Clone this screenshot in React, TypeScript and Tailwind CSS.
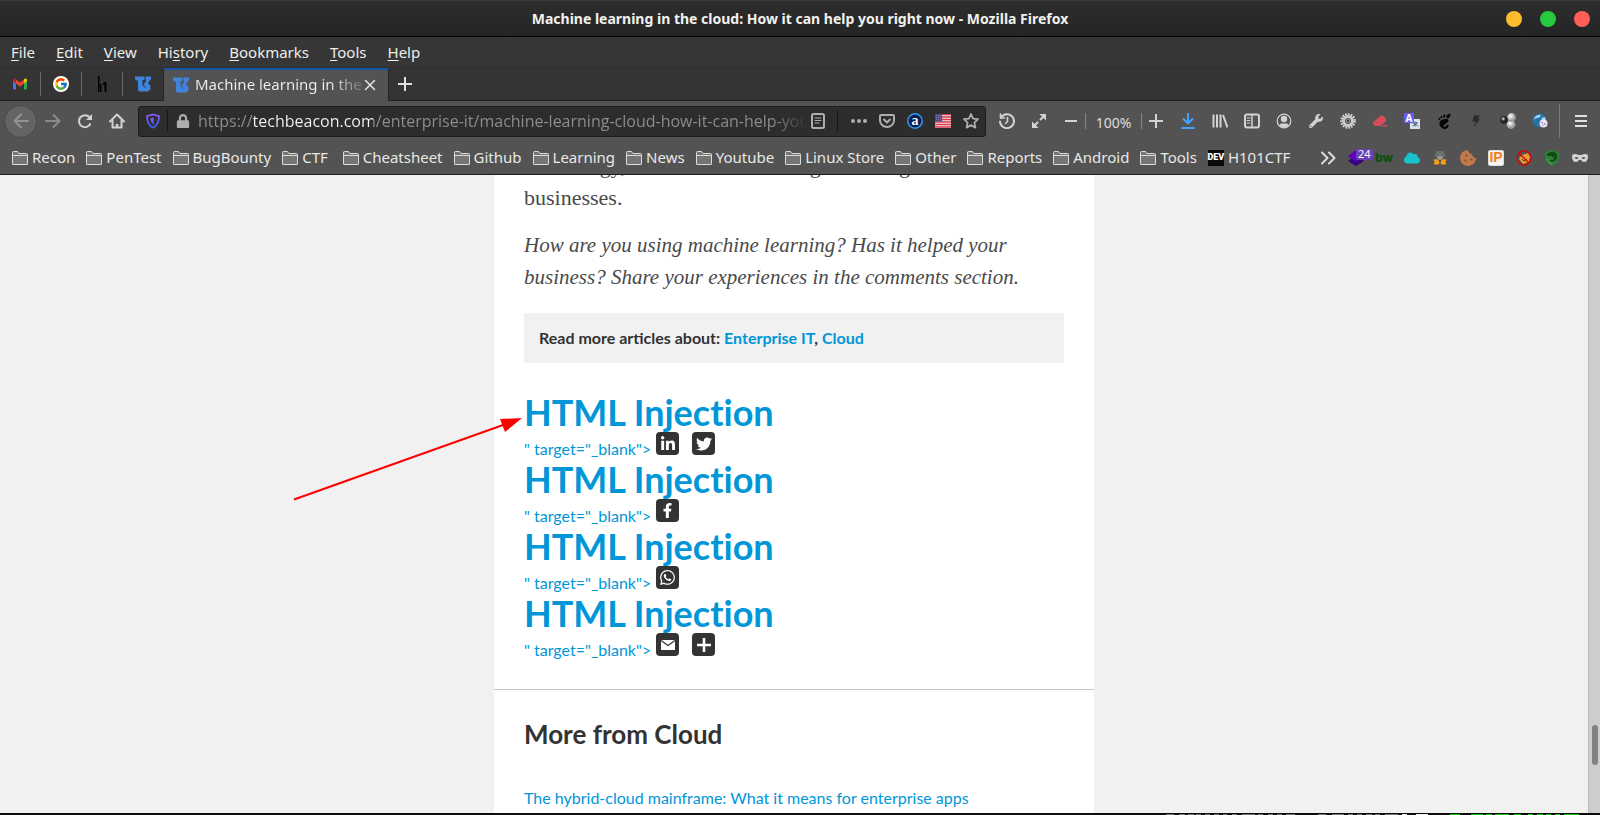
import type { ReactNode } from "react";
import { FcGoogle } from "react-icons/fc";
import {
  FaCloud,
  FaCookieBite,
  FaFacebookF,
  FaLinkedinIn,
  FaLock,
  FaTwitter,
  FaWhatsapp,
  FaWrench,
} from "react-icons/fa";
import { SiGnome } from "react-icons/si";

const ui = "font-['Noto_Sans',sans-serif]";

function Gmail() {
  return (
    <svg viewBox="0 0 16 16" className="size-4">
      <path d="M1 4.5v8.2c0 .5.4.8.8.8H4V7z" fill="#4f6ff5" />
      <path d="M15 4.5v8.2c0 .5-.4.8-.8.8H12V7z" fill="#2fa84f" />
      <path d="M12 3.6V7.6l3-2.3V4c0-1.6-1.6-2-2.4-1.2z" fill="#fbbc04" />
      <path d="M4 3.6V7.6L1 5.3V4c0-1.6 1.6-2 2.4-1.2z" fill="#c5221f" />
      <path d="M4 3.4 8 6.5l4-3.1v4.2l-4 3.1-4-3.1z" fill="#ea4335" />
    </svg>
  );
}

function Beacon() {
  return (
    <svg viewBox="0 0 16 16" className="size-4 shrink-0" fill="#3f83dc">
      <path d="M0 .5H9.500V4H7.500V9L11 12.500V15.500H4L3 14V4.500H1L0 3z" />
      <path d="M10.500 .5H16V3L13 7l2.500 3V13L13 15.500H11V12L8.500 8.500 11 5V3.500H10.500z" />
    </svg>
  );
}

function HackerOne() {
  return (
    <svg viewBox="0 0 16 16" className="size-4" fill="#000">
      <path d="M3.500 0h2v16h-1.500V1zM5.500 8h1v1h-1zM6 8.500h1.500V16H6zM8.500 7.500l2-1.500h2v10h-2V8.500h-2z" />
    </svg>
  );
}

function Folder() {
  return (
    <svg viewBox="0 0 16 14" className="h-[14px] w-4 shrink-0" fill="#757573" stroke="#dcdcda" strokeWidth="1">
      <path d="M.5 13V1.500Q.5.5 1.500.5H5.500L7 2.500H14.500Q15.500 2.500 15.500 3.500V13Q15.500 13.500 15 13.500H1Q.5 13.500.5 13z" />
      <path d="M.5 4.500h15" />
    </svg>
  );
}

function Cell({ label, children }: { label: string; children: ReactNode }) {
  return (
    <button type="button" aria-label={label} className="flex h-8 w-8 shrink-0 items-center justify-center text-[#d3d3d1]">
      {children}
    </button>
  );
}

function Small({ label, children }: { label: string; children: ReactNode }) {
  return (
    <button type="button" aria-label={label} className="flex h-7 w-7 shrink-0 items-center justify-center text-[#d3d3d1]">
      {children}
    </button>
  );
}

function Line({ children, className = "size-4", width = 2 }: { children: ReactNode; className?: string; width?: number }) {
  return (
    <svg viewBox="0 0 16 16" className={className} fill="none" stroke="currentColor" strokeWidth={width} strokeLinecap="round" strokeLinejoin="round">
      {children}
    </svg>
  );
}

const menus: [string, string, string][] = [
  ["", "F", "ile"],
  ["", "E", "dit"],
  ["", "V", "iew"],
  ["Hi", "s", "tory"],
  ["", "B", "ookmarks"],
  ["", "T", "ools"],
  ["", "H", "elp"],
];

const folders = ["Recon", "PenTest", "BugBounty", "CTF ", "Cheatsheet", "Github", "Learning", "News", "Youtube", "Linux Store", "Other", "Reports", "Android", "Tools"];

function TitleBar() {
  return (
    <header className="grid h-[37px] shrink-0 grid-cols-[1fr_auto_1fr] items-center border-t border-b border-t-[#3c3c3c] border-b-black bg-linear-to-b from-[#2d2d2d] to-[#252525]">
      <span />
      <h1 className="text-sm font-bold text-[#f1f1ef]">Machine learning in the cloud: How it can help you right now - Mozilla Firefox</h1>
      <div className="flex justify-end gap-[18px] pr-[10px]">
        <button type="button" aria-label="Minimize" className="size-4 rounded-full bg-[#febc2e]" />
        <button type="button" aria-label="Maximize" className="size-4 rounded-full bg-[#28c840]" />
        <button type="button" aria-label="Close" className="size-4 rounded-full bg-[#ff5f57]" />
      </div>
    </header>
  );
}

function MenuBar() {
  return (
    <nav className="flex h-[31px] shrink-0 items-center gap-[21px] border-b border-[#2e2e2e] bg-[#363636] px-[11px] pt-px text-[15px] text-[#eeeeec]">
      {menus.map(([before, key, after]) => (
        <button type="button" key={key + after}>
          {before}
          <span className="underline underline-offset-2">{key}</span>
          {after}
        </button>
      ))}
    </nav>
  );
}

function TabBar() {
  const pinned: [string, ReactNode][] = [
    ["Gmail", <Gmail />],
    ["Google", <span className="rounded-full bg-white p-px"><FcGoogle className="size-[14px]" /></span>],
    ["HackerOne", <HackerOne />],
    ["TechBeacon", <Beacon />],
  ];
  return (
    <div className="flex h-[33px] shrink-0 border-b border-[#1f1f1f] bg-[#343434]">
      {pinned.map(([name, icon], i) => (
        <div key={name} className="flex items-center">
          <button type="button" aria-label={name} className="flex w-10 justify-center">{icon}</button>
          {i < 3 && <span className="h-6 w-px bg-[#6c6c6c]" />}
        </div>
      ))}
      <div className="-mb-px flex w-[226px] items-center gap-[6px] border-x border-t-2 border-x-[#232323] border-t-[#1556a8] bg-[#535353] pr-3 pb-[2px] pl-[9px]">
        <Beacon />
        <span className="flex-1 bg-linear-to-r from-[#f0f0ee] from-80% to-[#f0f0ee]/20 bg-clip-text text-[15px] whitespace-nowrap text-transparent">Machine learning in the</span>
        <button type="button" aria-label="Close tab" className="-ml-1 shrink-0 text-[#e4e4e2]">
          <Line className="size-3"><path d="M2 2l12 12M14 2 2 14" /></Line>
        </button>
      </div>
      <button type="button" aria-label="New tab" className="flex w-8 items-center justify-center text-[#e0e0de]">
        <svg viewBox="0 0 14 14" className="size-[14px]" stroke="currentColor" strokeWidth="2"><path d="M7 0v14M0 7h14" /></svg>
      </button>
    </div>
  );
}

function AddressBar() {
  return (
    <div className="flex h-[31px] min-w-0 flex-1 items-center rounded-[3px] border border-[#1b1b1b] bg-[#2d2d2d] text-[#aeaeac]">
      <button type="button" aria-label="Tracking protection" className="flex w-7 justify-center">
        <svg viewBox="0 0 16 16" className="size-4" fill="none">
          <defs>
            <linearGradient id="shield" x1="0" y1="0" x2="0" y2="1"><stop stopColor="#9059ff" /><stop offset="1" stopColor="#3a5bf0" /></linearGradient>
          </defs>
          <path d="M8 1.500 14 3.200C14 8.500 12.500 12.500 8 14.700 3.500 12.500 2 8.500 2 3.200z" stroke="url(#shield)" strokeWidth="1.800" strokeLinejoin="round" />
          <path d="M8 4.500V11.800C5.800 10.500 5 8 4.800 5.200z" fill="url(#shield)" transform="translate(.6)" />
        </svg>
      </button>
      <span className="h-[22px] w-px bg-[#171717]" />
      <button type="button" aria-label="Connection secure" className="flex w-[30px] justify-center"><FaLock className="size-[14px]" /></button>
      <input
        aria-label="Address"
        readOnly
        value="https://techbeacon.com/enterprise-it/machine-learning-cloud-how-it-can-help-you-"
        className="min-w-0 flex-1 bg-[linear-gradient(90deg,#8f8f8d_0,#8f8f8d_55px,#f6f6f4_55px,#f6f6f4_175px,#8f8f8d_175px,#8f8f8d_calc(100%-36px),transparent)] bg-clip-text font-['Open_Sans',sans-serif] text-base text-transparent outline-none"
      />
      <button type="button" aria-label="Reader view" className="flex w-5 justify-center">
        <Line><rect x="2" y="1" width="12" height="14" rx="1.500" /><path d="M5 5h6M5 7.500h6M5 10h4" strokeWidth="1" /></Line>
      </button>
      <span className="mr-[7px] ml-[9px] h-[22px] w-px bg-[#171717]" />
      <button type="button" aria-label="Page actions" className="flex w-7 justify-center">
        <svg viewBox="0 0 16 16" className="size-4" fill="currentColor"><circle cx="2" cy="8" r="2" /><circle cx="8" cy="8" r="2" /><circle cx="14" cy="8" r="2" /></svg>
      </button>
      <button type="button" aria-label="Save to Pocket" className="flex w-7 justify-center">
        <Line><path d="M2 2h12q1 0 1 1v4.500a7 6.500 0 0 1-14 0V3q0-1 1-1z" /><path d="M5 6.500l3 3 3-3" /></Line>
      </button>
      <button type="button" aria-label="Alexa" className="flex w-7 justify-center">
        <svg viewBox="0 0 16 16" className="size-4">
          <circle cx="8" cy="8" r="7.200" fill="#0b1d52" stroke="#2f9bea" strokeWidth="1.500" />
          <text x="8" y="12" textAnchor="middle" fontSize="14" fontWeight="700" fontFamily="Liberation Serif, serif" fill="#fff">a</text>
        </svg>
      </button>
      <button type="button" aria-label="United States" className="flex w-7 justify-center">
        <svg viewBox="0 0 16 14" className="h-[14px] w-4">
          <rect width="16" height="14" fill="#f3e6e6" />
          <path d="M0 .5h16M0 3h16M0 5.500h16M0 8h16M0 10.500h16M0 13h16" stroke="#d43b4c" strokeWidth="1.300" />
          <rect width="7" height="7.500" fill="#4a4a86" />
          <path d="M1 1.500h5M1 3.500h5M1 5.500h5" stroke="#8d8dbb" strokeWidth=".7" strokeDasharray="1 1" />
        </svg>
      </button>
      <button type="button" aria-label="Bookmark this page" className="flex w-7 justify-center">
        <Line width={1.8}><path d="M8 1l2.100 4.600 4.900.6-3.600 3.400 1 5L8 12.100 3.600 14.600l1-5L1 6.200l4.900-.6z" /></Line>
      </button>
    </div>
  );
}

function Toolbar() {
  return (
    <div className="flex h-10 shrink-0 items-center bg-[#535353] pl-1">
      <button type="button" aria-label="Back" className="flex size-[33px] items-center justify-center rounded-full border border-[#484848] bg-[#646464] text-[#939391]">
        <Line><path d="M15 8H1.500M8 1.500 1.500 8 8 14.500" /></Line>
      </button>
      <Cell label="Forward"><span className="text-[#8b8b89]"><Line><path d="M1 8h13.500M8.500 2l6 6-6 6" /></Line></span></Cell>
      <Cell label="Reload">
        <Line><path d="M13.500 10.500A6 6 0 1 1 12.500 4.200" strokeLinecap="butt" /><path d="M15 1v6H9z" fill="currentColor" stroke="none" /></Line>
      </Cell>
      <Cell label="Home">
        <Line><path d="M1 8.500 8 1.500l7 7" /><path d="M3.500 7.500V14.500h9V7.500" /><path d="M8 15v-4" strokeWidth="2.500" strokeLinecap="butt" /></Line>
      </Cell>
      <span className="w-[5px]" />
      <AddressBar />
      <span className="w-[5px]" />
      <Cell label="History">
        <Line><path d="M2.200 4.200A7 7 0 1 1 1 8.500" /><path d="M1.500 1v4h4M8.500 4.500V8.500L6.500 10.500" strokeWidth="1.600" /></Line>
      </Cell>
      <Cell label="Full screen">
        <Line><path d="M9.500 6.500 14 2M6.500 9.500 2 14" /><path d="M8.500 1H15v6.500zM7.500 15H1V8.500z" fill="currentColor" stroke="none" /></Line>
      </Cell>
      <Cell label="Zoom out"><Line><path d="M2 8h12" strokeLinecap="butt" /></Line></Cell>
      <span className="-ml-[2px] h-4 w-px bg-[#868686]" />
      <button type="button" className="w-[55px] pt-[3px] text-center text-sm text-[#dededc]">100%</button>
      <span className="-mr-[2px] h-4 w-px bg-[#868686]" />
      <Cell label="Zoom in"><Line><path d="M8 1v14M1 8h14" strokeLinecap="butt" /></Line></Cell>
      <Cell label="Downloads">
        <span className="text-[#45a1ff]"><Line><path d="M8 1v9M3.500 6 8 10.500 12.500 6M2 15h12" /></Line></span>
      </Cell>
      <Cell label="Library"><Line><path d="M1.500 1.500v13M5 1.500v13M8.500 1.500v13M11 2l4.500 12.500" strokeLinecap="butt" /></Line></Cell>
      <Cell label="Sidebars">
        <Line><rect x="1" y="1.500" width="14" height="13" rx="2" /><path d="M8 2v12" strokeWidth="1.500" /><path d="M3 5h3M3 7.500h3M3 10h3" strokeWidth="1" /></Line>
      </Cell>
      <Cell label="Account">
        <svg viewBox="0 0 16 16" className="size-4" fill="currentColor">
          <circle cx="8" cy="8" r="6.800" fill="none" stroke="currentColor" strokeWidth="1.200" />
          <circle cx="8" cy="6" r="3.200" />
          <path d="M3.200 12.400C4 10 6 10.500 8 10.500s4-.5 4.800 1.900A6.500 6.500 0 0 1 3.200 12.400z" />
        </svg>
      </Cell>
      <Cell label="Developer tools"><FaWrench className="size-[14px]" /></Cell>
      <Cell label="Settings">
        <svg viewBox="0 0 16 16" className="size-4">
          <circle cx="8" cy="8" r="6.600" fill="none" stroke="#d5d5d3" strokeWidth="2.400" strokeDasharray="1.700 1.100" />
          <circle cx="8" cy="8" r="4.200" fill="none" stroke="#c9c9c7" strokeWidth="3.400" />
          <circle cx="8" cy="8" r="2.600" fill="#999" stroke="#555" strokeWidth="1" />
          <circle cx="8" cy="8" r="1.200" fill="#3c3c3c" />
        </svg>
      </Cell>
      <Cell label="Eraser">
        <svg viewBox="0 0 16 16" className="size-4"><path d="M9 2.500Q10 1.800 11 2.800L14 6Q14.700 7 14 8L9 13H3L1 11Q.3 10 1.200 9z" fill="#d64c5b" /><path d="M10.500 13H15" stroke="#d64c5b" strokeWidth="1.500" /></svg>
      </Cell>
      <Cell label="Translate">
        <svg viewBox="0 0 16 16" className="size-4 overflow-visible">
          <rect x="6" y="6" width="10" height="10" fill="#d9e3ea" />
          <path d="M8 10h6M11 8.500v5M8.500 13q4-1 4.500-4M10 11.500q3-.5 4 2" stroke="#4c6683" strokeWidth="1" fill="none" />
          <rect width="10" height="10" fill="#665df5" />
          <text x="5" y="8.500" textAnchor="middle" fontSize="10" fontWeight="700" fill="#fff">A</text>
        </svg>
      </Cell>
      <Cell label="GNOME integration"><SiGnome className="size-[15px] text-[#050505]" /></Cell>
      <Cell label="Lightning">
        <svg viewBox="0 0 16 16" className="size-4" fill="#2a2a2a" stroke="#3d3d3d" strokeWidth=".6"><path d="M6 2.500h5.500l-2 3.500H12L5.500 14 8 8.500H4.500z" /></svg>
      </Cell>
      <Cell label="Proxy">
        <svg viewBox="0 0 16 16" className="size-4">
          <defs>
            <radialGradient id="ball" cx=".4" cy=".35"><stop stopColor="#fff" /><stop offset="1" stopColor="#9b9b9b" /></radialGradient>
            <radialGradient id="dark" cx=".4" cy=".35"><stop stopColor="#eee" /><stop offset=".6" stopColor="#222" /></radialGradient>
          </defs>
          <circle cx="11" cy="11.500" r="4.400" fill="url(#ball)" />
          <circle cx="11.500" cy="4.500" r="4.400" fill="url(#ball)" />
          <circle cx="4" cy="7" r="3.800" fill="url(#dark)" />
        </svg>
      </Cell>
      <Cell label="Web search">
        <svg viewBox="0 0 16 16" className="size-4">
          <circle cx="7.500" cy="7.500" r="7" fill="#2571a9" />
          <path d="M2 5q3-4 7-3-1 3-4 3T2 8zM9 5l4-1 1 4-3 1z" fill="#a6d4ee" />
          <circle cx="11.500" cy="10.500" r="4" fill="#ece5f2" />
          <path d="M9.500 9.500h1.500M12 11h1.500M10.500 12h1" stroke="#8a4f9e" strokeWidth="1.200" />
        </svg>
      </Cell>
      <span className="ml-[3px] h-[34px] w-px bg-[#777]" />
      <button type="button" aria-label="Open menu" className="flex w-10 justify-center pl-[2px] text-[#e0e0de]">
        <svg viewBox="0 0 12 12" className="size-3" stroke="currentColor" strokeWidth="2"><path d="M0 1h12M0 6h12M0 11h12" /></svg>
      </button>
    </div>
  );
}

function BookmarksBar() {
  return (
    <div className="flex h-[34px] shrink-0 items-center justify-between border-b border-[#1d1d1d] bg-[#535353] pr-[6px] pl-3 text-[15px] text-[#e8e8e6]">
      <div className="flex items-center gap-[11px]">
        {folders.map((name) => (
          <button type="button" key={name} className="flex items-center gap-1 whitespace-pre">
            <Folder />
            {name}
          </button>
        ))}
        <button type="button" className="flex items-center gap-1">
          <span className="flex size-4 items-center justify-center bg-[#0b0b0b] font-['Roboto',sans-serif] text-[9px] font-black text-white">DEV</span>
          H101CTF
        </button>
      </div>
      <div className="flex items-center">
        <button type="button" aria-label="More bookmarks" className="mr-[6px] text-[#dcdcda]">
          <Line><path d="M2 2.500 7.500 8 2 13.500M9 2.500 14.500 8 9 13.500" /></Line>
        </button>
        <div className="relative">
          <Small label="Wappalyzer">
            <svg viewBox="0 0 16 16" className="size-4"><path d="M0 11 8 5l8 6-8 5z" fill="#35017c" /><path d="M0 6 8 0l8 6-8 6z" fill="#5d00bb" /></svg>
          </Small>
          <span className="absolute top-[5px] left-[14px] flex h-[11px] items-center rounded-[2px] bg-[#6a41b8] px-[2px] text-[11px] text-white">24</span>
        </div>
        <Small label="BuiltWith"><span className="pt-px font-['Inter',sans-serif] text-[12px] font-black text-[#134e13]">bw</span></Small>
        <Small label="Cloud"><FaCloud className="size-4 text-[#17c3ce]" /></Small>
        <Small label="User agent">
          <svg viewBox="0 0 16 16" className="size-[14px]">
            <path d="M4 0h8l1 4 2 1v1H1V5l2-1z" fill="#707070" />
            <path d="M4.500 6h7v2.500l-3.500 2-3.500-2z" fill="#9b9b9b" />
            <path d="M1 15.500 2 9l4 1 1.500 3-1 2.500zM15 15.500 14 9l-4 1-1.500 3 1 2.500zM0 10l3-1v4zM16 10l-3-1v4z" fill="#f2a11c" />
          </svg>
        </Small>
        <Small label="Cookies"><FaCookieBite className="size-4 text-[#c27848]" /></Small>
        <Small label="IP address"><span className="flex size-4 items-center justify-center rounded-[2px] border border-[#dcdcdc] bg-[#f7f5f2] font-['Liberation_Sans',sans-serif] text-[14px] font-bold text-[#f08020]">IP</span></Small>
        <Small label="Block">
          <svg viewBox="0 0 16 16" className="size-4">
            <path d="M3 9q2-5 7-5l2-1 2 4-1 5-6 2z" fill="#e99a34" />
            <path d="M6 9l2 2 3-2" stroke="#5b3210" strokeWidth="1" fill="none" />
            <circle cx="8" cy="8" r="7" fill="none" stroke="#c40d0d" strokeWidth="1.500" />
            <path d="M3 3l10 10" stroke="#c40d0d" strokeWidth="1.500" />
          </svg>
        </Small>
        <Small label="Green">
          <svg viewBox="0 0 16 16" className="size-4">
            <path d="M8 0q4 1 7 2.500Q16.500 13 8 16-.5 13 1 2.500 4 1 8 0z" fill="#2c8134" />
            <path d="M3 4q5-4 9-1 3 4-1 8-5 2-6-1 4 1 5-2-3-3-7-2z" fill="#144a19" />
            <path d="M3 9q1 4 5 5" stroke="#55aa55" fill="none" />
          </svg>
        </Small>
        <Small label="Private mask">
          <svg viewBox="0 0 16 16" className="size-4" fill="#d3d3d1" fillRule="evenodd">
            <path d="M0 6Q0 4 3 4q2 0 3.500 1h3Q11 4 13 4q3 0 3 2 0 6-4 6-2 0-3-2H7q-1 2-3 2-4 0-4-6zM2.500 8q2-2 4 0-2 2-4 0zM9.500 8q2-2 4 0-2 2-4 0z" />
          </svg>
        </Small>
      </div>
    </div>
  );
}

function Share({ label, children }: { label: string; children: ReactNode }) {
  return (
    <a href="#share" aria-label={label} className="flex size-[23px] items-center justify-center rounded-[4px] bg-[#333] text-white">
      {children}
    </a>
  );
}

function Injection({ children }: { children: ReactNode }) {
  return (
    <li className="flex h-[67px] flex-col">
      <a href="#blank" className="h-[39px] text-4xl leading-[39px] font-bold [font-variant-ligatures:none]">HTML Injection</a>
      <div className="flex gap-[13px]">
        <a href="#blank" className="-mr-2 pt-[7px] text-base leading-5">" target="_blank"&gt;</a>
        {children}
      </div>
    </li>
  );
}

function Article() {
  return (
    <article className="relative mx-auto w-[600px] bg-white">
      <div className="px-[30px]">
        <div className="-mt-[26px] font-['Liberation_Serif',serif] text-[22px] leading-8 text-[#4a4a4a]">
          <p>technology, and machine learning has a larger role for businesses.</p>
          <p className="mt-[15px] text-[21px] italic">How are you using machine learning? Has it helped your business? Share your experiences in the comments section.</p>
        </div>
        <p className="mt-5 bg-[#f1f1f1] px-[15px] py-[13px] text-base leading-6 font-bold text-[#333]">
          Read more articles about: <a href="#it" className="text-[#0096d8]">Enterprise IT</a>, <a href="#cloud" className="text-[#0096d8]">Cloud</a>
        </p>
        <ul className="mt-[30px] text-[#0096d8]">
          <Injection>
            <Share label="LinkedIn"><FaLinkedinIn className="size-4" /></Share>
            <Share label="Twitter"><FaTwitter className="size-4" /></Share>
          </Injection>
          <Injection>
            <Share label="Facebook"><FaFacebookF className="size-[15px]" /></Share>
          </Injection>
          <Injection>
            <Share label="WhatsApp"><FaWhatsapp className="size-[17px]" /></Share>
          </Injection>
          <Injection>
            <Share label="Email">
              <svg viewBox="0 0 14 10" className="h-[10px] w-[14px]"><rect width="14" height="10" fill="#fff" /><path d="M0 .5 7 5.500l7-5" stroke="#333" strokeWidth="1.200" fill="none" /></svg>
            </Share>
            <Share label="More"><svg viewBox="0 0 14 14" className="size-[14px]" stroke="currentColor" strokeWidth="2.600"><path d="M7 0v14M0 7h14" /></svg></Share>
          </Injection>
        </ul>
      </div>
      <section className="mt-7 border-t border-[#c4c4c4] px-[30px] pt-7 pb-6">
        <h2 className="text-[26px] leading-8 font-bold text-[#333]">More from Cloud</h2>
        <a href="#hybrid" className="mt-9 block text-base leading-6 text-[#0096d8]">The hybrid-cloud mainframe: What it means for enterprise apps</a>
      </section>
      <svg viewBox="0 0 230 86" className="absolute top-[266px] -left-[201px] h-[86px] w-[230px]">
        <path d="M1 83.500 210 9" stroke="#f00" strokeWidth="2" />
        <path d="M229 2 207 3l5 13z" fill="#f00" />
      </svg>
    </article>
  );
}

export default function App() {
  return (
    <div className={`flex h-screen flex-col overflow-hidden bg-[#0b0d0e] ${ui}`}>
      <TitleBar />
      <MenuBar />
      <TabBar />
      <Toolbar />
      <BookmarksBar />
      <div className="flex min-h-0 flex-1">
        <main className="min-w-0 flex-1 overflow-hidden bg-[#f1f1f1] pt-px font-['Lato',sans-serif]">
          <Article />
        </main>
        <div className="flex w-3 flex-col items-center border-l border-[#bdbdb5] bg-[#cdcdcd]">
          <span className="grow-[550]" />
          <span className="h-10 w-[6px] rounded-full bg-[#7e8382]" />
          <span className="grow-[48]" />
        </div>
      </div>
      <svg viewBox="0 0 434 2" className="h-[2px] w-[434px] shrink-0 self-end">
        <path d="M0 1.500h8M13 1.500h6M22 1.500h6M30 1.500h5M39 1.500h5M48 1.500h5M57 1.500h4M66 1.500h5M76 1.500h13M92 1.500h5M102 1.500h5M111 1.500h5M120 1.500h9M152 1.500h8M166 1.500h12M182 1.500h5M191 1.500h5M200 1.500h6M209 1.500h5M219 1.500h13" stroke="#77776f" />
        <path d="M236 1.500h5M250 1.500h12" stroke="#f2f2f2" />
        <path d="M284 1.500h10M305 1.500h12M320 1.500h6M329 1.500h14M348 1.500h7M362 1.500h5M371 1.500h6M380 1.500h5M389 1.500h5M398 1.500h15" stroke="#08c808" />
      </svg>
    </div>
  );
}
